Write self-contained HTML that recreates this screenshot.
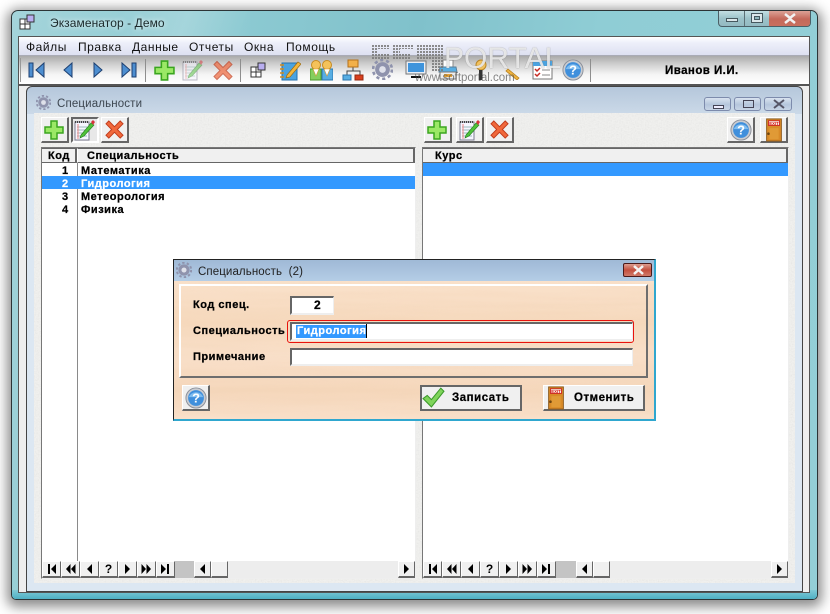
<!DOCTYPE html>
<html><head><meta charset="utf-8"><style>
html,body{margin:0;padding:0;background:#fff}
#r{position:relative;width:830px;height:614px;overflow:hidden;background:#fff;font-family:"Liberation Sans",sans-serif}
#r div,#r svg{position:absolute}
.b{font-weight:bold;font-size:11px;letter-spacing:.52px;color:#000;line-height:13px;white-space:nowrap;margin-top:1px;-webkit-text-stroke:.25px currentColor}
.m{font-size:12px;color:#111;letter-spacing:.55px;line-height:16px;top:39px;white-space:nowrap}
.tb{background:#f0f0f0;border-top:1px solid #fff;border-left:1px solid #fff;border-right:2px solid #666;border-bottom:2px solid #666;box-sizing:border-box}
.nv{width:19px;height:17px;top:561px;background:#f0f0f0;border-top:1px solid #fff;border-left:1px solid #fff;border-right:1px solid #666;border-bottom:2px solid #666;box-sizing:border-box;font:bold 12px/14px "Liberation Sans",sans-serif;text-align:center;color:#000}
.nv svg{left:3px;top:2px}
.fld{background:#fff;box-sizing:border-box;border-top:2px solid #666;border-left:2px solid #666;border-right:1px solid #eee;border-bottom:2px solid #eee}
.bt{background:#f0f0f0;box-sizing:border-box;border-top:1px solid #fff;border-left:1px solid #fff;border-right:2px solid #666;border-bottom:2px solid #666}
.wb{box-sizing:border-box;border:1px solid #7d8bac;border-radius:3px;background:linear-gradient(#d9e3ef,#b5c6dc 55%,#c8d5e6)}
</style></head><body><div id="r">
<svg width="0" height="0" style="left:0;top:0"><defs>
<symbol id="plus" viewBox="0 0 20 20"><path d="M7 1h6v6h6v6h-6v6H7v-6H1V7h6z" fill="#9be866" stroke="#3aa51f" stroke-width="1.5"/></symbol>
<symbol id="cross" viewBox="0 0 20 20"><path d="M1 4L4 1l6 6 6-6 3 3-6 6 6 6-3 3-6-6-6 6-3-3 6-6z" fill="#f0683c" stroke="#c03a1a" stroke-width="1"/></symbol>
<symbol id="note" viewBox="0 0 22 22"><rect x="2" y="3" width="14" height="18" fill="#f6f6ff" stroke="#7c7c90"/><path d="M2 3h14" stroke="#444" stroke-width="2" stroke-dasharray="1 1"/><path d="M4 8h10M4 11h8M4 14h8M4 17h10" stroke="#9bb"/><path d="M5 5v15" stroke="#e88"/><path d="M8 16l10-12 3 2-10 11-4 2z" fill="#4fc23a" stroke="#227a1c" stroke-width=".6"/><path d="M18 3l2-2 2 2-2 3z" fill="#d8333a"/></symbol>
<symbol id="help" viewBox="0 0 24 24"><circle cx="12" cy="12" r="11" fill="#c9ccd2" stroke="#8b8f98"/><circle cx="12" cy="12" r="8.6" fill="#3f8fdc"/><path d="M4 11a8.500 8 0 0 1 16 0z" fill="#7fbdf0"/><text x="12" y="17" font-family="Liberation Sans" font-weight="bold" font-size="14" fill="#fff" text-anchor="middle">?</text></symbol>
<symbol id="door" viewBox="0 0 18 26"><rect x="1" y="1" width="16" height="24" fill="#d88a28" stroke="#8a5618"/><rect x="3" y="3" width="12" height="5" fill="#f4f0e8" stroke="#c22"/><text x="9" y="7.400" font-family="Liberation Sans" font-weight="bold" font-size="4.600" fill="#d11" text-anchor="middle">EXIT</text><rect x="4" y="11" width="10" height="12" fill="#e09a36"/><circle cx="3" cy="17" r="1.400" fill="#6e4510"/></symbol>
<symbol id="gear" viewBox="0 0 20 20"><circle cx="10" cy="10" r="7" fill="#8f93ad"/><circle cx="10" cy="10" r="9" fill="none" stroke="#8f93ad" stroke-width="2.500" stroke-dasharray="3 2.700"/><circle cx="10" cy="10" r="3.200" fill="#dfe1ea"/></symbol>
<symbol id="win" viewBox="0 0 16 16"><path d="M1 5h5v5H1zM6 5h5v5H6zM1 10h5v5H1zM6 10h5v5H6z" fill="#fff" stroke="#333"/><path d="M8 1h7v7H8z" fill="#b9aef0" stroke="#333"/></symbol>
<symbol id="chk" viewBox="0 0 22 20"><path d="M1 11l4-3 4 4L18 1l3 3L9 19z" fill="#7fd45b" stroke="#3c9a2a"/></symbol>
<symbol id="n1" viewBox="0 0 11 10"><path d="M2 0h2v10H2zM10 0v10L5 5z"/></symbol>
<symbol id="n2" viewBox="0 0 11 10"><path d="M5.500 0v10L1 5zM10.500 0v10L6 5z"/></symbol>
<symbol id="n3" viewBox="0 0 11 10"><path d="M8 0v10L3 5z"/></symbol>
<symbol id="n4" viewBox="0 0 11 10"><path d="M3 0v10l5-5z"/></symbol>
<symbol id="n5" viewBox="0 0 11 10"><path d="M.5 0v10L5 5zM5.500 0v10L10 5z"/></symbol>
<symbol id="n6" viewBox="0 0 11 10"><path d="M1 0v10l5-5zM7 0h2v10H7z"/></symbol>
<pattern id="dots" width="3" height="3" patternUnits="userSpaceOnUse"><rect width="2" height="2" fill="#7a7a7a"/></pattern>
</defs></svg>

<!-- outer shadow + frame -->
<div style="left:11px;top:10px;width:807px;height:590px;border-radius:7px 7px 5px 5px;box-sizing:border-box;border:1px solid #2c3436;box-shadow:0 3px 12px 4px rgba(0,0,0,.45);background:linear-gradient(100deg,#a4d4da 0,#8ccad2 25%,#80c1cb 45%,#8fcdd5 65%,#94cfd7 100%)"></div>
<div style="left:12px;top:590px;width:805px;height:9px;border-radius:0 0 4px 4px;background:linear-gradient(#7fc9d6,#4fb0c4)"></div>
<div style="left:120px;top:11px;width:130px;height:25px;background:linear-gradient(110deg,rgba(255,255,255,0),rgba(255,255,255,.18) 50%,rgba(255,255,255,0))"></div>

<!-- caption buttons -->
<div style="left:718px;top:11px;width:93px;height:16px;border:1px solid #4b5f66;border-top:0;box-sizing:border-box;border-radius:0 0 4px 4px;background:linear-gradient(#c4dfe3,#9cc2c9 50%,#94bac2);overflow:hidden">
<div style="left:25px;top:0;width:1px;height:16px;background:#5c7076"></div>
<div style="left:50px;top:0;width:42px;height:16px;background:linear-gradient(#dca296,#c4685a 50%,#c9705f)"></div>
<div style="left:7px;top:7px;width:12px;height:4px;background:#dbe7ea;border:1px solid #46585e;box-sizing:border-box"></div>
<div style="left:32px;top:2px;width:12px;height:10px;background:#dbe7ea;border:1px solid #46585e;box-sizing:border-box"></div>
<div style="left:35px;top:5px;width:6px;height:4px;background:#8fb6bd;border:1px solid #46585e;box-sizing:border-box"></div>
<svg style="left:64px;top:2px" width="14" height="11"><path d="M2 1l5 4 5-4M2 10l5-4 5 4" fill="none" stroke="#f2f2f2" stroke-width="2.500"/></svg>
</div>
<svg style="left:19px;top:14px" width="16" height="16"><use href="#win"/></svg>
<div style="left:50px;top:15px;font-size:12px;line-height:16px;letter-spacing:.08px;color:#1c2a2c;white-space:nowrap;text-shadow:0 0 6px #fff">Экзаменатор - Демо</div>

<!-- client -->
<div style="left:18px;top:36px;width:792px;height:557px;background:#eee;border:1px solid #555;box-sizing:border-box"></div>

<!-- menu -->
<div style="left:19px;top:37px;width:790px;height:19px;background:linear-gradient(#fff,#eef0fa 30%,#dde0f1);border-bottom:1px solid #a9abb6;box-sizing:border-box"></div>
<div class="m" style="left:26px">Файлы</div><div class="m" style="left:78px">Правка</div><div class="m" style="left:132px">Данные</div><div class="m" style="left:189px">Отчеты</div><div class="m" style="left:244px">Окна</div><div class="m" style="left:286px">Помощь</div>

<!-- toolbar -->
<div style="left:19px;top:56px;width:790px;height:30px;background:linear-gradient(#aaa,#d0d0d0 30%,#f4f4f4 65%,#fff);border-bottom:2px solid #555;box-sizing:border-box"></div>
<div style="left:20px;top:58px;width:1px;height:24px;background:#999"></div>
<div style="left:145px;top:59px;width:1px;height:23px;background:#8e8e8e"></div>
<div style="left:240px;top:59px;width:1px;height:23px;background:#8e8e8e"></div>
<div style="left:590px;top:59px;width:1px;height:23px;background:#8e8e8e"></div>

<svg style="left:25px;top:60px" width="115" height="20">
<g fill="#4d8ed0" stroke="#1d3f70" stroke-width="1"><rect x="4" y="3" width="4" height="14"/><path d="M19 3v14l-8-7z"/><path d="M47 3v14l-8-7z"/><path d="M69 3v14l8-7z"/><path d="M97 3v14l8-7z"/><rect x="107" y="3" width="4" height="14"/></g></svg>
<svg style="left:154px;top:60px" width="21" height="21"><use href="#plus"/></svg>
<svg style="left:181px;top:59px;opacity:.5" width="22" height="22"><use href="#note"/></svg>
<svg style="left:213px;top:60px;opacity:.7" width="20" height="21"><use href="#cross"/></svg>
<svg style="left:250px;top:62px" width="16" height="16"><use href="#win"/></svg>
<svg style="left:279px;top:59px" width="22" height="22"><path d="M3 4h15v17H3z" fill="#4ba3e0" stroke="#2671ad"/><path d="M1 6h4M1 10h4M1 14h4M1 18h4" stroke="#d08a1d" stroke-width="1.500"/><path d="M8 16L19 3l3 2-11 13-4 1z" fill="#f3b53c" stroke="#9a6a10" stroke-width=".7"/></svg>
<svg style="left:310px;top:59px" width="23" height="22"><rect x="0" y="10" width="11" height="11" fill="#86cf5e" stroke="#4b9a2b"/><rect x="12" y="10" width="11" height="11" fill="#58aee3" stroke="#2b76ad"/><circle cx="6" cy="6" r="4.500" fill="#f4c25a" stroke="#c68b22"/><circle cx="17" cy="6" r="4.500" fill="#f4c25a" stroke="#c68b22"/><path d="M3 10l3 7 3-7zM14 10l3 7 3-7z" fill="#fff" stroke="#d49c36" stroke-width=".6"/></svg>
<svg style="left:342px;top:59px" width="22" height="22"><path d="M11 7v5M5 17v-5h13v5" fill="none" stroke="#444"/><rect x="6" y="1" width="10" height="7" fill="#f2b04a" stroke="#b5711a"/><rect x="1" y="16" width="8" height="5" fill="#58aee3" stroke="#2b76ad"/><rect x="13" y="16" width="8" height="5" fill="#d8401e" stroke="#982810"/></svg>
<svg style="left:372px;top:59px" width="21" height="21"><use href="#gear"/></svg>
<svg style="left:405px;top:60px" width="22" height="20"><rect x="1" y="1" width="20" height="13" fill="#e9eef5" stroke="#777"/><rect x="3" y="3" width="16" height="9" fill="#3f94dc"/><path d="M6 17h10" stroke="#111" stroke-width="2"/></svg>
<svg style="left:438px;top:59px" width="20" height="22"><rect x="5" y="1" width="10" height="7" fill="#fff" stroke="#888"/><path d="M2 8h16l1 5H1z" fill="#58aee3" stroke="#5a7f9a"/><rect x="2" y="13" width="16" height="7" fill="#eee" stroke="#777"/><rect x="6" y="15" width="8" height="3" fill="#e3a23a"/></svg>
<svg style="left:472px;top:59px" width="18" height="22"><circle cx="9" cy="6" r="5" fill="#f1c15e" stroke="#b98524"/><rect x="7" y="11" width="3.500" height="10" fill="#333"/></svg>
<svg style="left:499px;top:62px" width="22" height="18"><path d="M9 7l11 9-2 2L7 9z" fill="#eeb340" stroke="#b9801c" stroke-width=".8"/><path d="M1 1l6 3" stroke="#bbb"/></svg>
<svg style="left:532px;top:60px" width="21" height="20"><rect x="1" y="1" width="19" height="18" fill="#fff" stroke="#777"/><rect x="1" y="1" width="19" height="5" fill="#4ba3e0"/><path d="M3 9l2 2 3-3M3 14l2 2 3-3" fill="none" stroke="#c62a22" stroke-width="1.500"/><path d="M10 10h8M10 15h8" stroke="#888"/></svg>
<svg style="left:562px;top:59px" width="22" height="22"><use href="#help"/></svg>
<div class="b" style="left:665px;top:64px;letter-spacing:.45px;font-size:11.500px">Иванов И.И.</div>

<!-- watermark -->
<svg style="left:372px;top:45px;opacity:.85" width="72" height="30"><path d="M0 0h18v4h-12v5h12v6H0zM21 0h21v4h-14v5h10v6H21zM45 0h15v15H45zM60 0h11v27H60z" fill="url(#dots)"/></svg>
<div style="left:444px;top:42px;font-size:30px;line-height:34px;color:rgba(255,255,255,.78);text-shadow:0 0 1px rgba(110,110,110,.8);white-space:nowrap">PORTAL</div>
<div style="left:415px;top:71px;font-size:11.500px;line-height:14px;color:rgba(70,70,70,.65);white-space:nowrap">www.softportal.com</div>

<!-- child window -->
<div style="left:26px;top:86px;width:777px;height:506px;box-sizing:border-box;border:1px solid #444;border-radius:6px 6px 0 0;background:linear-gradient(#b5c7db,#cbd9e8 27px,#dce7f2 27px)"></div>
<svg style="left:36px;top:95px" width="15" height="15"><use href="#gear"/></svg>
<div style="left:57px;top:97px;font-size:11.500px;line-height:14px;color:#3d4650;letter-spacing:.15px;white-space:nowrap">Специальности</div>
<div class="wb" style="left:704px;top:97px;width:27px;height:14px"><div style="left:8px;top:7px;width:11px;height:4px;border:1px solid #445;box-sizing:border-box;background:#eef"></div></div>
<div class="wb" style="left:734px;top:97px;width:27px;height:14px"><div style="left:8px;top:2px;width:11px;height:8px;border:1px solid #445;box-sizing:border-box"></div></div>
<div class="wb" style="left:764px;top:97px;width:28px;height:14px"><svg style="left:8px;top:1px" width="12" height="10"><path d="M1 1l10 8M11 1L1 9" stroke="#556" stroke-width="2"/></svg></div>

<!-- child content -->
<div style="left:34px;top:113px;width:761px;height:470px;background:#f0f0ee"></div>
<svg style="left:34px;top:113px" width="761" height="470"><filter id="n"><feTurbulence type="fractalNoise" baseFrequency=".7" numOctaves="2" seed="3"/><feColorMatrix values="0 0 0 0 .5 0 0 0 0 .5 0 0 0 0 .5 .5 .5 0 0 -.42"/></filter><rect width="761" height="470" filter="url(#n)" opacity=".5"/></svg>

<!-- child toolbar left -->
<div class="tb" style="left:41px;top:117px;width:28px;height:26px"></div><svg style="left:44px;top:120px" width="20" height="20"><use href="#plus"/></svg>
<div style="left:71px;top:117px;width:28px;height:26px;box-sizing:border-box;background:#e8e8e8;border:2px solid #666;border-bottom-color:#fff;border-right-color:#fff"></div><svg style="left:73px;top:119px" width="22" height="22"><use href="#note"/></svg>
<div class="tb" style="left:101px;top:117px;width:28px;height:26px"></div><svg style="left:105px;top:120px" width="19" height="19"><use href="#cross"/></svg>
<!-- right -->
<div class="tb" style="left:424px;top:117px;width:28px;height:26px"></div><svg style="left:427px;top:120px" width="20" height="20"><use href="#plus"/></svg>
<div class="tb" style="left:456px;top:117px;width:28px;height:26px"></div><svg style="left:458px;top:119px" width="22" height="22"><use href="#note"/></svg>
<div class="tb" style="left:486px;top:117px;width:28px;height:26px"></div><svg style="left:490px;top:120px" width="19" height="19"><use href="#cross"/></svg>
<div class="tb" style="left:727px;top:117px;width:28px;height:26px"></div><svg style="left:730px;top:119px" width="22" height="22"><use href="#help"/></svg>
<div class="tb" style="left:760px;top:117px;width:28px;height:26px"></div><svg style="left:765px;top:118px" width="18" height="24"><use href="#door"/></svg>

<!-- left grid -->
<div style="left:41px;top:147px;width:375px;height:432px;background:#fff;box-sizing:border-box;border:1px solid #777;border-right:1px solid #eee;border-bottom:1px solid #eee"></div>
<div style="left:42px;top:148px;width:35px;height:15px;background:#f0f0f0;box-sizing:border-box;border-top:1px solid #666;border-right:2px solid #666;border-bottom:1px solid #666"></div>
<div style="left:77px;top:148px;width:338px;height:15px;background:#f0f0f0;box-sizing:border-box;border-top:1px solid #666;border-right:2px solid #666;border-bottom:1px solid #666;border-left:1px solid #fff"></div>
<div style="left:77px;top:163px;width:1px;height:398px;background:#8a8a8a"></div>
<div style="left:42px;top:176px;width:373px;height:13px;background:#3399ff"></div>
<div class="b" style="left:48px;top:149px">Код</div><div class="b" style="left:87px;top:149px">Специальность</div>
<div class="b" style="left:62px;top:164px">1</div><div class="b" style="left:81px;top:164px">Математика</div>
<div class="b" style="left:62px;top:177px;color:#fff">2</div><div class="b" style="left:81px;top:177px;color:#fff">Гидрология</div>
<div class="b" style="left:62px;top:190px">3</div><div class="b" style="left:81px;top:190px">Метеорология</div>
<div class="b" style="left:62px;top:203px">4</div><div class="b" style="left:81px;top:203px">Физика</div>

<!-- right grid -->
<div style="left:422px;top:147px;width:367px;height:432px;background:#fff;box-sizing:border-box;border:1px solid #777;border-right:1px solid #eee;border-bottom:1px solid #eee"></div>
<div style="left:423px;top:148px;width:365px;height:15px;background:#f0f0f0;box-sizing:border-box;border-top:1px solid #666;border-right:2px solid #666;border-bottom:1px solid #666"></div>
<div style="left:423px;top:163px;width:365px;height:13px;background:#3399ff"></div>
<div class="b" style="left:435px;top:149px">Курс</div>

<!-- left nav -->
<div style="left:42px;top:561px;width:373px;height:17px;background:#ededed"></div>
<div class="nv" style="left:42px"><svg width="11" height="10"><use href="#n1"/></svg></div><div class="nv" style="left:61px"><svg width="11" height="10"><use href="#n2"/></svg></div><div class="nv" style="left:80px"><svg width="11" height="10"><use href="#n3"/></svg></div><div class="nv" style="left:99px">?</div><div class="nv" style="left:118px"><svg width="11" height="10"><use href="#n4"/></svg></div><div class="nv" style="left:137px"><svg width="11" height="10"><use href="#n5"/></svg></div><div class="nv" style="left:156px"><svg width="11" height="10"><use href="#n6"/></svg></div>
<div style="left:175px;top:561px;width:19px;height:17px;background:#c4c4c4"></div>
<div class="nv" style="left:194px;width:17px"><svg style="left:2px" width="11" height="10"><use href="#n3"/></svg></div><div class="nv" style="left:211px;width:17px"></div><div class="nv" style="left:398px;width:17px"><svg style="left:2px" width="11" height="10"><use href="#n4"/></svg></div>
<!-- right nav -->
<div style="left:423px;top:561px;width:365px;height:17px;background:#ededed"></div>
<div class="nv" style="left:423px"><svg width="11" height="10"><use href="#n1"/></svg></div><div class="nv" style="left:442px"><svg width="11" height="10"><use href="#n2"/></svg></div><div class="nv" style="left:461px"><svg width="11" height="10"><use href="#n3"/></svg></div><div class="nv" style="left:480px">?</div><div class="nv" style="left:499px"><svg width="11" height="10"><use href="#n4"/></svg></div><div class="nv" style="left:518px"><svg width="11" height="10"><use href="#n5"/></svg></div><div class="nv" style="left:537px"><svg width="11" height="10"><use href="#n6"/></svg></div>
<div style="left:556px;top:561px;width:20px;height:17px;background:#c4c4c4"></div>
<div class="nv" style="left:576px;width:17px"><svg style="left:2px" width="11" height="10"><use href="#n3"/></svg></div><div class="nv" style="left:593px;width:17px"></div><div class="nv" style="left:771px;width:17px"><svg style="left:2px" width="11" height="10"><use href="#n4"/></svg></div>

<!-- dialog -->
<div style="left:173px;top:259px;width:483px;height:162px;box-sizing:border-box;border:1px solid #222;border-bottom:2px solid #2fa7cf;border-right:2px solid #2fa7cf;background:#f6d9bd"></div>
<div style="left:174px;top:260px;width:480px;height:21px;background:linear-gradient(#9fb9d6,#b4cde6)"></div>
<svg style="left:176px;top:262px" width="16" height="16"><use href="#gear"/></svg>
<div style="left:198px;top:265px;font-size:11.500px;line-height:14px;letter-spacing:.1px;color:#222;white-space:pre">Специальность  (2)</div>
<div style="left:623px;top:263px;width:29px;height:14px;box-sizing:border-box;border:1px solid #4b1a1a;border-radius:2px;background:linear-gradient(#dd9d90,#c4503f 50%,#d07a68)"><svg style="left:8px;top:1px" width="13" height="10"><path d="M2 1l9 8M11 1L2 9" stroke="#f4f4f4" stroke-width="2.500"/></svg></div>
<svg style="left:174px;top:281px" width="480" height="138"><defs><linearGradient id="w" x1="0" y1="0" x2="0" y2="1"><stop offset="0" stop-color="#fae2cc"/><stop offset=".3" stop-color="#f6d9bd"/><stop offset=".55" stop-color="#f9e0ca"/><stop offset=".8" stop-color="#f5d7bb"/><stop offset="1" stop-color="#f9e0ca"/></linearGradient><filter id="g"><feTurbulence type="fractalNoise" baseFrequency=".012 .18" numOctaves="2" seed="5"/><feColorMatrix values="0 0 0 0 .85 0 0 0 0 .6 0 0 0 0 .4 .8 0 0 0 -.22"/></filter></defs><rect width="480" height="138" fill="url(#w)"/><rect width="480" height="138" filter="url(#g)" opacity=".3"/></svg>
<div style="left:179px;top:284px;width:469px;height:94px;box-sizing:border-box;border-top:2px solid #fff;border-left:2px solid #fff;border-right:2px solid #6e6e6e;border-bottom:2px solid #6e6e6e"></div>
<div class="b" style="left:193px;top:298px">Код спец.</div>
<div class="b" style="left:193px;top:324px">Специальность</div>
<div class="b" style="left:193px;top:350px">Примечание</div>
<div class="fld" style="left:290px;top:296px;width:44px;height:19px"></div>
<div class="b" style="left:314px;top:298px;font-size:12px">2</div>
<div style="left:287px;top:320px;width:347px;height:23px;box-sizing:border-box;border:1px solid #e8130d;border-radius:3px"></div>
<div class="fld" style="left:290px;top:322px;width:343px;height:19px"></div>
<div style="left:296px;top:325px;width:71px;height:13px;background:#3399ff"></div>
<div style="left:366px;top:324px;width:1px;height:14px;background:#000"></div>
<div class="b" style="left:297px;top:324px;color:#fff">Гидрология</div>
<div class="fld" style="left:290px;top:348px;width:343px;height:18px"></div>

<div class="bt" style="left:182px;top:385px;width:28px;height:26px"></div><svg style="left:185px;top:387px" width="22" height="22"><use href="#help"/></svg>
<div class="bt" style="left:420px;top:385px;width:102px;height:26px;border:2px solid #666"></div><svg style="left:422px;top:387px" width="23" height="21"><use href="#chk"/></svg>
<div class="b" style="left:452px;top:391px;font-size:11.500px">Записать</div>
<div class="bt" style="left:543px;top:385px;width:102px;height:26px"></div><svg style="left:547px;top:386px" width="18" height="24"><use href="#door"/></svg>
<div class="b" style="left:574px;top:391px;font-size:11.500px">Отменить</div>
</div></body></html>
